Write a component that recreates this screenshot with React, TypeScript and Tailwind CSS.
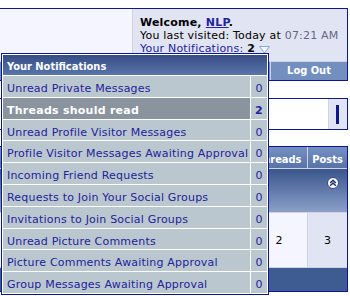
import React from "react";

const rows: { label: string; count: string; hi?: boolean }[] = [
  { label: "Unread Private Messages", count: "0" },
  { label: "Threads should read", count: "2", hi: true },
  { label: "Unread Profile Visitor Messages", count: "0" },
  { label: "Profile Visitor Messages Awaiting Approval", count: "0" },
  { label: "Incoming Friend Requests", count: "0" },
  { label: "Requests to Join Your Social Groups", count: "0" },
  { label: "Invitations to Join Social Groups", count: "0" },
  { label: "Unread Picture Comments", count: "0" },
  { label: "Picture Comments Awaiting Approval", count: "0" },
  { label: "Group Messages Awaiting Approval", count: "0" },
];

const verdana = { fontFamily: '"DejaVu Sans", Verdana, sans-serif' };
const tahoma = { fontFamily: '"DejaVu Sans Condensed", "Liberation Sans", Tahoma, sans-serif' };

export default function App() {
  return (
    <div
      className="relative w-[350px] h-[296px] bg-white overflow-hidden text-black tracking-[0.2px]"
      style={verdana}
    >
      <div className="pt-[8px] pr-[2px]">
        {/* navbar table */}
        <div className="flex flex-col gap-px border-t border-r border-b border-[#0B198C] bg-[#D1D1E1]">
          <div className="flex gap-px h-[52px]">
            <div className="w-[132px] bg-[#F5F5FF]" />
            <div className="flex-1 bg-[#E1E4F2] pl-[7px] pt-[7px] text-[11px] leading-[13px] whitespace-nowrap">
              <div>
                <span className="font-bold">
                  Welcome, <span className="text-[#22229C] underline">NLP</span>.
                </span>
              </div>
              <div>
                You last visited: Today at <span className="text-[#666686]">07:21 AM</span>
              </div>
              <div className="flex items-center">
                <span className="text-[#22229C] underline">Your Notifications:</span>
                <span className="font-bold ml-[4px]">2</span>
                <svg width="11" height="8" viewBox="0 0 11 8" className="ml-[4px] mt-[2px]">
                  <polygon points="0.5,0.5 10.5,0.5 5.5,7" fill="#F2F5FA" stroke="#8AA6CC" strokeWidth="1" />
                </svg>
              </div>
            </div>
          </div>
          <div className="flex gap-px h-[18px]">
            <div className="flex-1 bg-[#738FBF]" />
            <div
              className="w-[76px] bg-[#738FBF] text-white font-bold text-[11px] tracking-normal flex items-center justify-center"
              style={tahoma}
            >
              Log Out
            </div>
          </div>
        </div>

        {/* search-ish box */}
        <div className="mt-[17px] h-[32px] flex gap-px border-t border-r border-b border-[#0B198C] bg-[#D1D1E1]">
          <div className="flex-1 bg-white" />
          <div className="w-[18px] bg-[#E1E4F2] pl-[7px] pt-[6px]">
            <div className="w-[3px] h-[19px] bg-[#0B198C]" />
          </div>
        </div>

        {/* forum table */}
        <div className="mt-[16px] flex flex-col gap-px border-t border-r border-b border-[#0B198C] bg-[#D1D1E1]">
          <div
            className="flex gap-px h-[21px] text-white font-bold text-[11px] leading-[13px] tracking-normal"
            style={tahoma}
          >
            <div className="flex-1 bg-gradient-to-b from-[#7590c2] to-[#5873a8]" />
            <div className="w-[56px] bg-gradient-to-b from-[#7590c2] to-[#5873a8] pt-[6px] text-center">
              Threads
            </div>
            <div className="w-[39px] bg-gradient-to-b from-[#7590c2] to-[#5873a8] pt-[6px] text-center">
              Posts
            </div>
          </div>
          <div className="h-[43px] bg-gradient-to-b from-[#3b568c] to-[#8aa0c9] flex justify-end pr-[8px] pt-[8px]">
            <svg width="12" height="12" viewBox="0 0 12 12">
              <circle cx="6" cy="6" r="5.5" fill="#ffffff" stroke="#31478a" strokeWidth="1" />
              <polyline points="3.2,6 6,3.2 8.8,6" fill="none" stroke="#1d2f70" strokeWidth="1.5" />
              <polyline points="3.2,8.8 6,6 8.8,8.8" fill="none" stroke="#1d2f70" strokeWidth="1.5" />
            </svg>
          </div>
          <div className="flex gap-px h-[54px] text-[11px] leading-[13px]">
            <div className="flex-1 bg-[#F5F5FF]" />
            <div className="w-[56px] bg-[#F5F5FF] pt-[21px] text-center">2</div>
            <div className="w-[39px] bg-[#E1E4F2] pt-[21px] text-center">3</div>
          </div>
          <div className="h-[23px] bg-[#3E5C92]" />
        </div>
      </div>

      {/* notifications popup */}
      <div className="absolute left-[1px] top-[53px] w-[268px] border border-[#0B198C] bg-white p-px flex flex-col gap-px">
        <div
          className="h-[20px] bg-gradient-to-b from-[#354d84] to-[#5a75a9] text-white font-bold text-[11px] leading-[13px] tracking-normal pt-[5px] pl-[4px]"
          style={tahoma}
        >
          Your Notifications
        </div>
        {rows.map((r) => (
          <div key={r.label} className="flex gap-px h-[20.8px] text-[11px] leading-[13px]">
            <div
              className={
                r.hi
                  ? "flex-1 bg-[#8A949E] text-white font-bold tracking-[0.25px] pt-[6px] pl-[4px] whitespace-nowrap"
                  : "flex-1 bg-[#BBC7CE] text-[#22229C] pt-[6px] pl-[4px] whitespace-nowrap"
              }
            >
              {r.label}
            </div>
            <div
              className={
                r.hi
                  ? "w-[16px] bg-[#BBC7CE] text-[#22229C] font-bold pt-[6px] text-center"
                  : "w-[16px] bg-[#BBC7CE] text-[#22229C] pt-[6px] text-center"
              }
            >
              {r.count}
            </div>
          </div>
        ))}
      </div>
    </div>
  );
}
